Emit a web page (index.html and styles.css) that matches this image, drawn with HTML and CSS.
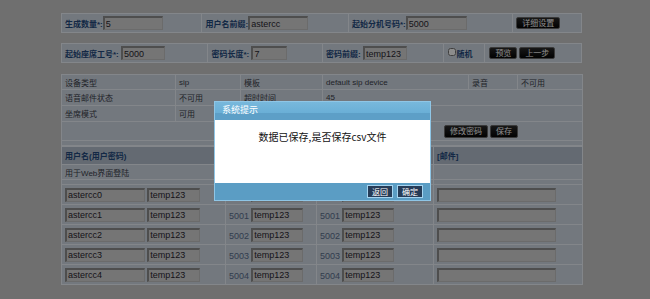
FILE: index.html
```html
<!DOCTYPE html>
<html lang="zh-CN">
<head>
    <meta charset="UTF-8">
    <title>批量生成座席</title>
    <link rel="stylesheet" href="styles.css">
</head>
<body>
    <div class="page">
        <div class="bar">
            <div class="cell bar1-a"><label>生成数量*:</label><input class="txt w60" value="5"></div>
            <div class="cell bar1-b"><label>用户名前缀:</label><input class="txt w60" value="astercc"></div>
            <div class="cell bar1-c"><label>起始分机号码*:</label><input class="txt w61" value="5000"></div>
            <div class="cell bar1-d"><button class="btn">详细设置</button></div>
        </div>

        <div class="bar bar-second">
            <div class="cell bar2-a"><label>起始座席工号*: </label><input class="txt w44" value="5000"></div>
            <div class="cell bar2-b"><label>密码长度*: </label><input class="txt w36" value="7"></div>
            <div class="cell bar2-c"><label>密码前缀: </label><input class="txt w44" value="temp123"></div>
            <div class="cell bar2-d"><input type="checkbox" class="chk"><label>随机</label></div>
            <div class="cell bar2-e"><button class="btn">预览</button><button class="btn">上一步</button></div>
        </div>

        <table class="grid info">
            <colgroup>
                <col class="ic1"><col class="ic2"><col class="ic3"><col class="ic4"><col class="ic5"><col class="ic6">
            </colgroup>
            <tr class="r15"><td>设备类型</td><td>sip</td><td>模板</td><td>default sip device</td><td>录音</td><td>不可用</td></tr>
            <tr class="r16"><td>语音邮件状态</td><td>不可用</td><td>超时时间</td><td colspan="3">45</td></tr>
            <tr class="r16"><td>坐席模式</td><td>可用</td><td></td><td colspan="3"></td></tr>
            <tr class="r19"><td colspan="6" class="actions"><button class="btn">修改密码</button><button class="btn">保存</button></td></tr>
            <tr class="r5"><td colspan="6"></td></tr>
        </table>

        <table class="grid users">
            <colgroup>
                <col class="uc1"><col class="uc2"><col class="uc3"><col class="uc4">
            </colgroup>
            <tr class="head"><th>用户名(用户密码)</th><th></th><th></th><th>[邮件]</th></tr>
            <tr class="r15"><td>用于Web界面登陆</td><td></td><td></td><td></td></tr>
            <tr class="r5"><td></td><td></td><td></td><td></td></tr>
            <tr class="r20">
                <td><input class="txt w80" value="astercc0"> <input class="txt w53" value="temp123"></td>
                <td><span class="num">5000</span> <input class="txt w52" value="temp123"></td>
                <td><span class="num">5000</span> <input class="txt w52" value="temp123"></td>
                <td><input class="txt w119"></td>
            </tr>
            <tr class="r20">
                <td><input class="txt w80" value="astercc1"> <input class="txt w53" value="temp123"></td>
                <td><span class="num">5001</span> <input class="txt w52" value="temp123"></td>
                <td><span class="num">5001</span> <input class="txt w52" value="temp123"></td>
                <td><input class="txt w119"></td>
            </tr>
            <tr class="r20">
                <td><input class="txt w80" value="astercc2"> <input class="txt w53" value="temp123"></td>
                <td><span class="num">5002</span> <input class="txt w52" value="temp123"></td>
                <td><span class="num">5002</span> <input class="txt w52" value="temp123"></td>
                <td><input class="txt w119"></td>
            </tr>
            <tr class="r20">
                <td><input class="txt w80" value="astercc3"> <input class="txt w53" value="temp123"></td>
                <td><span class="num">5003</span> <input class="txt w52" value="temp123"></td>
                <td><span class="num">5003</span> <input class="txt w52" value="temp123"></td>
                <td><input class="txt w119"></td>
            </tr>
            <tr class="r20">
                <td><input class="txt w80" value="astercc4"> <input class="txt w53" value="temp123"></td>
                <td><span class="num">5004</span> <input class="txt w52" value="temp123"></td>
                <td><span class="num">5004</span> <input class="txt w52" value="temp123"></td>
                <td><input class="txt w119"></td>
            </tr>
        </table>
    </div>

    <div class="mask"></div>

    <div class="dialog">
        <div class="dialog-title">系统提示</div>
        <div class="dialog-body">数据已保存,是否保存csv文件</div>
        <div class="dialog-foot">
            <button class="dbtn">返回</button>
            <button class="dbtn">确定</button>
        </div>
    </div>
</body>
</html>
```

FILE: styles.css
```css
body {
    margin: 0;
    background: #cacaca;
    font-family: "Liberation Sans", "Noto Sans CJK SC", sans-serif;
    font-size: 8px;
    color: #3c414b;
}

.page {
    width: 521px;
    margin-left: 61px;
    padding-top: 13px;
}

/* top form bars */
.bar {
    display: flex;
    height: 18px;
    background: #d1dae5;
    border: 1px solid #eef4fb;
}

.bar-second {
    margin-top: 10px;
}

.cell {
    display: flex;
    align-items: center;
    padding-left: 3px;
    border-left: 1px solid #eef4fb;
    box-sizing: border-box;
}

.cell:first-child {
    border-left: none;
}

.cell label {
    font-weight: bold;
    color: #244a7e;
    white-space: pre;
}

.bar1-a { width: 140px; }
.bar1-b { width: 147px; }
.bar1-c { width: 165px; }
.bar1-d { width: 69px; }

.bar2-a { width: 146px; }
.bar2-b { width: 115px; }
.bar2-c { width: 121px; }
.bar2-d { width: 42px; padding-left: 4px; }
.bar2-e { width: 97px; padding-left: 4px; gap: 2px; }

.chk {
    width: 8px;
    height: 8px;
    margin: 0 1px 3px 0;
}

/* inputs */
.txt {
    height: 14px;
    box-sizing: border-box;
    padding: 0 1px;
    margin: 0;
    font-family: "Liberation Sans", sans-serif;
    font-size: 9px;
    color: #2a2630;
    background: #d6d6d6;
    border: 1px solid #c4c4c4;
    border-top: 2px solid #8e8e8e;
    border-left: 2px solid #8e8e8e;
}

.w36 { width: 36px; }
.w44 { width: 44px; }
.w52 { width: 52px; }
.w53 { width: 53px; }
.w60 { width: 60px; }
.w61 { width: 61px; }
.w80 { width: 80px; }
.w119 { width: 119px; }

/* black buttons */
.btn {
    height: 12px;
    padding: 0 5px;
    margin: 0;
    font-family: "Noto Sans CJK SC", sans-serif;
    font-size: 8px;
    line-height: 10px;
    color: #ffffff;
    background: linear-gradient(#2a2a2a, #050505);
    border: 1px solid #6a6a6a;
    border-radius: 2px;
}

/* tables */
.grid {
    width: 521px;
    table-layout: fixed;
    border-collapse: collapse;
    background: #d1dae5;
}

.grid td, .grid th {
    border: 1px solid #eef4fb;
    padding: 0 3px;
    text-align: left;
    white-space: nowrap;
    overflow: hidden;
}

.info {
    margin-top: 11px;
}

.ic1 { width: 114px; }
.ic2 { width: 65px; }
.ic3 { width: 82px; }
.ic4 { width: 146px; }
.ic5 { width: 49px; }
.ic6 { width: 65px; }

.uc1 { width: 164px; }
.uc2 { width: 91px; }
.uc3 { width: 117px; }
.uc4 { width: 149px; }

.r5 { height: 5px; }
.r15 { height: 15px; }
.r16 { height: 16px; }
.r19 { height: 19px; }
.r20 { height: 20px; }

.actions {
    padding-left: 382px !important;
}

.actions .btn {
    height: 13px;
    margin-right: 2px;
}

.users .head {
    height: 18px;
    background: #b6c1cf;
}

.users th {
    font-weight: bold;
    color: #244a7e;
}

.num {
    color: #5b6f8f;
    font-size: 9px;
}

/* modal */
.mask {
    position: fixed;
    inset: 0;
    background: rgba(0, 0, 0, 0.45);
}

.dialog {
    position: fixed;
    left: 214px;
    top: 101px;
    width: 217px;
    height: 100px;
    box-sizing: border-box;
    border: 1px solid #8fc6e6;
    background: #ffffff;
    display: flex;
    flex-direction: column;
}

.dialog-title {
    height: 18px;
    line-height: 17px;
    padding-left: 7px;
    font-size: 9px;
    color: #ffffff;
    background: linear-gradient(#78b8dc 0%, #6aafd6 60%, #5d9fc7 60%, #5d9fc7 100%);
}

.dialog-body {
    flex: 1;
    text-align: center;
    padding-top: 9px;
    font-family: "Noto Sans CJK SC", sans-serif;
    font-size: 10px;
    color: #111111;
}

.dialog-foot {
    height: 17px;
    background: #5b9dc4;
    display: flex;
    justify-content: flex-end;
    align-items: center;
    gap: 4px;
    padding-right: 7px;
}

.dbtn {
    height: 13px;
    padding: 0 4px;
    margin: 0;
    font-family: "Noto Sans CJK SC", sans-serif;
    font-size: 8px;
    line-height: 11px;
    color: #ffffff;
    background: #263c58;
    border: 1px solid #a6d4f0;
}
```
